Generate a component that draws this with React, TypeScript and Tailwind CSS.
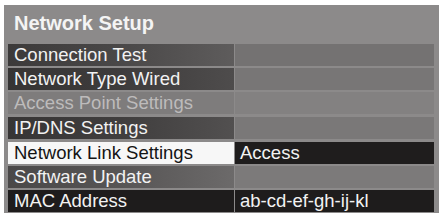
import React from "react";

type Row = {
  label: string;
  left: string;
  right: string;
  text: string;
  value?: string;
  top?: string;
};

const rows: Row[] = [
  { label: "Connection Test", left: "bg-linear-to-r from-[#3c3a3a] via-[#4a4848] to-[#5e5c5c]", right: "bg-[#747272]", text: "text-[#f2f2f2]", top: "mt-0" },
  { label: "Network Type Wired", left: "bg-linear-to-r from-[#363434] via-[#3e3c3c] to-[#4e4c4c]", right: "bg-[#787676]", text: "text-[#f2f2f2]", top: "mt-[2px]" },
  { label: "Access Point Settings", left: "bg-[#7e7c7c]", right: "bg-[#838181]", text: "text-[#bdbbbb]", top: "mt-[2px]" },
  { label: "IP/DNS Settings", left: "bg-linear-to-r from-[#373535] via-[#403e3e] to-[#525050]", right: "bg-[#7a7878]", text: "text-[#f2f2f2]", top: "mt-[3px]" },
  { label: "Network Link Settings", left: "bg-[#f7f7f7]", right: "bg-[#1f1d1d]", text: "text-[#141414]", value: "Access", top: "mt-[3px]" },
  { label: "Software Update", left: "bg-linear-to-r from-[#4a4848] via-[#575555] to-[#6c6a6a]", right: "bg-[#7c7a7a]", text: "text-[#f2f2f2]", top: "mt-[2px]" },
  { label: "MAC Address", left: "bg-[#1e1c1c]", right: "bg-[#1e1c1c]", text: "text-[#f2f2f2]", value: "ab-cd-ef-gh-ij-kl", top: "mt-[2px]" },
];

export default function App() {
  return (
    <div className="w-[443px] h-[215px] bg-white pt-[5px] pl-[4px] font-['Liberation_Sans',Arial,sans-serif]">
      <div className="w-[435px] h-[208px] bg-[#8c8a8a] flex flex-col pl-[4px] pr-[5px]">
        <div className="h-[39px] pt-[6px] pl-[6px] text-[20px] leading-[24px] font-bold text-[#f4f4f4]">
          Network Setup
        </div>
        {rows.map((r) => (
          <div key={r.label} className={`flex h-[22px] ${r.top}`}>
            <div className={`w-[226px] pl-[6px] text-[18.5px] leading-[22px] whitespace-nowrap ${r.left} ${r.text}`}>
              {r.label}
            </div>
            <div className={`flex-1 ml-[1px] pl-[5px] text-[18.5px] leading-[22px] text-[#f2f2f2] whitespace-nowrap ${r.right}`}>
              {r.value ?? ""}
            </div>
          </div>
        ))}
      </div>
    </div>
  );
}
